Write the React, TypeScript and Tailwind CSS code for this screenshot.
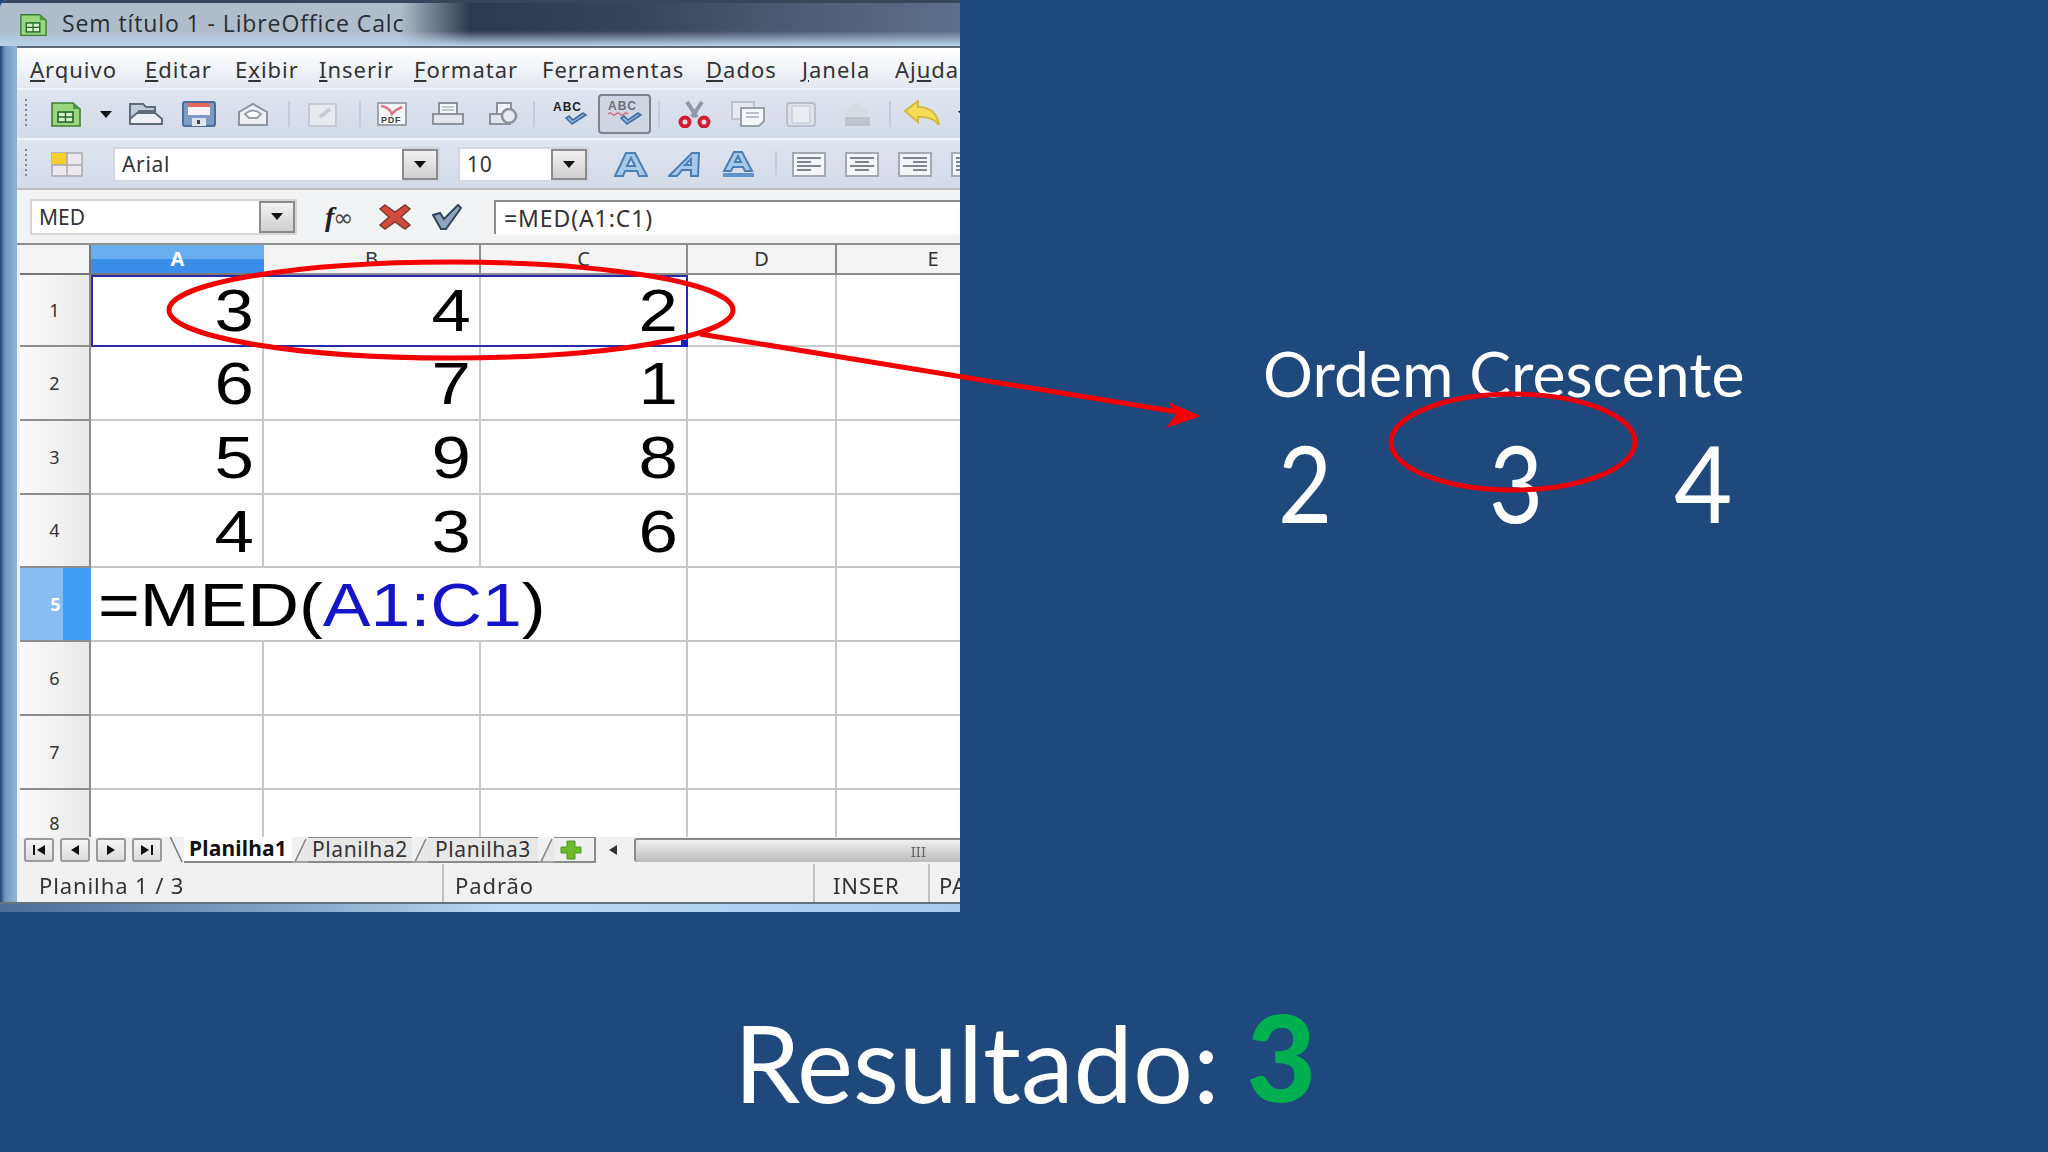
const rows = [
  ['3', '4', '2'],
  ['6', '7', '1'],
  ['5', '9', '8'],
  ['4', '3', '6'],
]

const menus = [
  { w: 'w-[115px]', pre: '', key: 'A', post: 'rquivo' },
  { w: 'w-[90px]', pre: '', key: 'E', post: 'ditar' },
  { w: 'w-[84px]', pre: 'E', key: 'x', post: 'ibir' },
  { w: 'w-[95px]', pre: '', key: 'I', post: 'nserir' },
  { w: 'w-[128px]', pre: '', key: 'F', post: 'ormatar' },
  { w: 'w-[164px]', pre: 'Fe', key: 'r', post: 'ramentas' },
  { w: 'w-[96px]', pre: '', key: 'D', post: 'ados' },
  { w: 'w-[93px]', pre: '', key: 'J', post: 'anela' },
  { w: 'w-[70px]', pre: 'Aj', key: 'u', post: 'da' },
]

function Grip() {
  return (
    <svg width="4" height="32" viewBox="0 0 4 32" className="shrink-0">
      <path d="M2 1v30" stroke="#7d8796" strokeWidth="2" strokeDasharray="2 3" />
    </svg>
  )
}

function Sep({ className }: { className: string }) {
  return <div className={`w-[2px] h-[26px] bg-[#c5ccd8] shrink-0 ${className}`} />
}

function CalcDoc({ size = 30 }: { size?: number }) {
  return (
    <svg width={size} height={size * 0.87} viewBox="0 0 30 26" className="shrink-0">
      <path d="M1 2h21l7 6v17H1z" fill="#9bd67f" stroke="#3f7d3c" strokeWidth="1.6" />
      <path d="M22 2l7 6h-7z" fill="#4d9b48" />
      <rect x="7" y="11" width="15" height="10" fill="#d8f0c8" stroke="#1f6a2a" strokeWidth="1.6" />
      <path d="M7 16h15M14.500 11v10" stroke="#1f6a2a" strokeWidth="1.4" />
    </svg>
  )
}

function Arrow({ className = '' }: { className?: string }) {
  return (
    <svg width="12" height="7" viewBox="0 0 12 7" className={`shrink-0 ${className}`}>
      <path d="M0 0h12L6 7z" fill="#111" />
    </svg>
  )
}

function Combo({ className, text }: { className: string; text: string }) {
  return (
    <div className={`h-[35px] bg-white border-2 border-[#d3d8e0] flex items-center shrink-0 ${className}`}>
      <span className="flex-1 pl-[7px] pt-[2px] text-[21px] text-[#333] tracking-[0.7px]">{text}</span>
      <div className="w-[36px] h-[31px] border-2 border-[#8b8b8b] bg-gradient-to-b from-[#f2f2f2] to-[#cfcfcf] flex items-center justify-center">
        <Arrow />
      </div>
    </div>
  )
}

function Toolbar1() {
  return (
    <div className="h-[50px] flex items-center pl-[7px] border-b-2 border-[#f0f3f8] bg-gradient-to-b from-[#dfe5ef] to-[#d3dbe8]">
      <Grip />
      <div className="ml-[23px]"><CalcDoc /></div>
      <Arrow className="ml-[19px]" />
      <svg width="34" height="24" viewBox="0 0 34 24" className="ml-[17px] shrink-0">
        <path d="M1 22V2h13l3 3h9v4H10L6 16" fill="#c4ccd6" stroke="#5e6b78" strokeWidth="2" />
        <path d="M8 11h18l7 6v5H1v-5z" fill="#eef1f5" stroke="#5e6b78" strokeWidth="2" />
      </svg>
      <svg width="34" height="26" viewBox="0 0 34 26" className="ml-[19px] shrink-0">
        <rect x="1" y="1" width="32" height="24" rx="2" fill="#7d9cc4" stroke="#4a6d9c" strokeWidth="2" />
        <rect x="6" y="2" width="22" height="12" fill="#f4f4f4" />
        <rect x="6" y="2" width="22" height="4" fill="#e36a5a" />
        <rect x="10" y="17" width="14" height="8" fill="#dfe4ea" />
        <rect x="15" y="19" width="3" height="4" fill="#444" />
      </svg>
      <svg width="32" height="24" viewBox="0 0 32 24" className="ml-[21px] shrink-0">
        <path d="M2 10L16 2l14 8v13H2z" fill="#eef0f3" stroke="#8d949e" strokeWidth="2" />
        <path d="M8 12q8-7 16 0l-4 4h-8z" fill="#fff" stroke="#98a0aa" strokeWidth="2" />
      </svg>
      <Sep className="ml-[19px]" />
      <svg width="30" height="25" viewBox="0 0 30 25" className="ml-[18px] shrink-0">
        <rect x="1" y="2" width="27" height="22" fill="#e7eaef" stroke="#c5cad2" strokeWidth="2" />
        <path d="M12 15l10-8" stroke="#c6cbd3" strokeWidth="4" />
      </svg>
      <Sep className="ml-[21px]" />
      <svg width="30" height="24" viewBox="0 0 30 24" className="ml-[16px] shrink-0">
        <rect x="1" y="1" width="28" height="22" fill="#f5f5f5" stroke="#8d939b" strokeWidth="1.6" />
        <path d="M4 4q8 1 11 8q3-4 10-7" stroke="#e07486" strokeWidth="2.500" fill="none" />
        <text x="4" y="21" fontFamily="Liberation Sans" fontWeight="700" fontSize="9" letterSpacing="0.8" fill="#444">PDF</text>
      </svg>
      <svg width="32" height="24" viewBox="0 0 32 24" className="ml-[25px] shrink-0">
        <path d="M7 1h18v11H7z" fill="#f2f4f7" stroke="#8b929c" strokeWidth="2" />
        <path d="M1 12h30v10H1z" fill="#e2e6ec" stroke="#8b929c" strokeWidth="2" />
        <path d="M10 5h12M10 8h12" stroke="#b3b9c2" strokeWidth="1.500" />
      </svg>
      <svg width="32" height="26" viewBox="0 0 32 26" className="ml-[23px] shrink-0">
        <path d="M3 13h20v10H3z" fill="#e2e6ec" stroke="#8b929c" strokeWidth="2" />
        <path d="M10 2h14v11H10z" fill="#f2f4f7" stroke="#8b929c" strokeWidth="2" />
        <circle cx="22" cy="15" r="7" fill="#e8ebf0" stroke="#8b929c" strokeWidth="2.500" />
      </svg>
      <Sep className="ml-[14px]" />
      <svg width="36" height="28" viewBox="0 0 36 28" className="ml-[17px] shrink-0">
        <text x="1" y="11" fontFamily="Liberation Sans" fontWeight="700" fontSize="12" letterSpacing="1" fill="#222">ABC</text>
        <path d="M14 18l6 6 14-9-3-2-10 7-4-4z" fill="#8fb4da" stroke="#3f6fa3" strokeWidth="1.600" />
      </svg>
      <div className="ml-[10px] w-[53px] h-[40px] rounded-[4px] border-2 border-[#7a828c] bg-[#cfd6e2] flex items-center justify-center shrink-0">
        <svg width="36" height="28" viewBox="0 0 36 28">
          <text x="1" y="10" fontFamily="Liberation Sans" fontWeight="700" fontSize="12" letterSpacing="1" fill="#6c6f78">ABC</text>
          <path d="M1 14q2-2 4 0t4 0 4 0 4 0 4 0" stroke="#d06a78" strokeWidth="1.200" fill="none" />
          <path d="M14 18l6 6 14-9-3-2-10 7-4-4z" fill="#8fb4da" stroke="#3f6fa3" strokeWidth="1.600" />
        </svg>
      </div>
      <Sep className="ml-[7px]" />
      <svg width="33" height="27" viewBox="0 0 33 27" className="ml-[18px] shrink-0">
        <path d="M9 1l10 15M24 1L14 16" stroke="#8f98a3" strokeWidth="4" />
        <circle cx="7" cy="21" r="4.500" fill="none" stroke="#d01c34" strokeWidth="4" />
        <circle cx="26" cy="21" r="4.500" fill="none" stroke="#d01c34" strokeWidth="4" />
      </svg>
      <svg width="34" height="26" viewBox="0 0 34 26" className="ml-[20px] shrink-0">
        <rect x="1" y="1" width="22" height="17" fill="#e6e9ee" stroke="#bdc3cc" strokeWidth="2" />
        <path d="M10 7h23v13l-5 5H10z" fill="#f5f6f8" stroke="#98a0aa" strokeWidth="2" />
        <path d="M15 12h13M15 16h13" stroke="#b8bec7" strokeWidth="2" />
      </svg>
      <svg width="30" height="26" viewBox="0 0 30 26" className="ml-[21px] shrink-0">
        <rect x="1" y="2" width="28" height="23" rx="3" fill="#dfe3ea" stroke="#b9bfc9" strokeWidth="2" />
        <rect x="6" y="5" width="18" height="17" fill="#e9ecf1" stroke="#c9ced6" strokeWidth="1.500" />
      </svg>
      <svg width="27" height="26" viewBox="0 0 27 26" className="ml-[28px] shrink-0">
        <path d="M13 1l11 9v5H2v-5z" fill="#d7dbe2" />
        <path d="M1 16h25v9H1z" fill="#bfc4cc" />
      </svg>
      <Sep className="ml-[18px]" />
      <svg width="36" height="28" viewBox="0 0 36 28" className="ml-[13px] shrink-0">
        <path d="M1 11L14 1v6q18 0 21 18-6-9-21-8v5z" fill="#f4dc58" stroke="#d2bb3e" strokeWidth="2" />
      </svg>
      <Arrow className="ml-[18px]" />
    </div>
  )
}

function Letter({ className, italic, underline }: { className: string; italic?: boolean; underline?: boolean }) {
  return (
    <svg width="34" height="27" viewBox="0 0 34 27" className={`shrink-0 ${className}`}>
      <path
        d={italic ? 'M1 25L24 2h7l-1 23h-7v-6H14l-5 6zM17 14h6v-6z' : underline ? 'M2 20L12 1h8l10 19h-7l-2-4h-10l-2 4zM13 11h6l-3-6z' : 'M1 25L12 2h9l12 23h-8l-2-5H11l-2 5zM13 15h8l-4-8z'}
        fill="#a8c8e8"
        stroke="#4a7fb5"
        strokeWidth="2"
        fillRule="evenodd"
      />
      {underline && <rect x="1" y="22" width="31" height="4" fill="#5d95cc" />}
    </svg>
  )
}

function Align({ className, lines }: { className: string; lines: string }) {
  return (
    <svg width="34" height="25" viewBox="0 0 34 25" className={`shrink-0 ${className}`}>
      <rect x="1" y="1" width="32" height="23" fill="#f4f5f7" stroke="#a4aab3" strokeWidth="2" />
      <path d={lines} stroke="#7f858e" strokeWidth="2" />
    </svg>
  )
}

function Toolbar2() {
  return (
    <div className="h-[50px] flex items-center pl-[7px] border-b-2 border-[#bdbdbd] bg-gradient-to-b from-[#dfe5ef] to-[#d3dbe8]">
      <Grip />
      <svg width="32" height="25" viewBox="0 0 32 25" className="ml-[23px] shrink-0">
        <rect x="1" y="1" width="30" height="23" fill="#ece8ee" stroke="#a9a9b0" strokeWidth="1.500" />
        <rect x="1" y="1" width="15" height="12" fill="#f5cf2d" />
        <path d="M16 1v23M1 13h30" stroke="#a9a9b0" strokeWidth="1.500" />
      </svg>
      <Combo className="ml-[30px] w-[327px]" text="Arial" />
      <Combo className="ml-[18px] w-[131px]" text="10" />
      <Letter className="ml-[25px]" />
      <Letter className="ml-[20px]" italic />
      <Letter className="ml-[20px]" underline />
      <Sep className="ml-[19px]" />
      <Align className="ml-[15px]" lines="M5 6h24M5 10h14M5 14h24M5 18h14" />
      <Align className="ml-[19px]" lines="M5 6h24M10 10h14M5 14h24M10 18h14" />
      <Align className="ml-[19px]" lines="M5 6h24M15 10h14M5 14h24M15 18h14" />
      <Align className="ml-[19px]" lines="M5 6h24M5 10h24M5 14h24M5 18h24" />
    </div>
  )
}

function FormulaBar() {
  return (
    <div className="h-[55px] flex items-center pl-[13px] border-b-2 border-[#8f8f8f] bg-[#f2f3f5]">
      <div className="h-[36px] w-[267px] bg-white border-2 border-[#d6d6d6] flex items-center shrink-0">
        <span className="flex-1 pl-[7px] pt-[3px] text-[21px] text-[#333]">MED</span>
        <div className="w-[36px] h-[32px] border-2 border-[#8b8b8b] bg-gradient-to-b from-[#f2f2f2] to-[#cfcfcf] flex items-center justify-center">
          <Arrow />
        </div>
      </div>
      <span className="ml-[28px] w-[36px] font-['Liberation_Serif'] italic font-bold text-[28px] text-[#222] shrink-0 whitespace-nowrap">
        f<span className="font-['DejaVu_Sans'] not-italic font-normal text-[24px] text-[#444] -ml-[1px]">∞</span>
      </span>
      <svg width="32" height="26" viewBox="0 0 32 26" className="ml-[18px] shrink-0">
        <path d="M6 1l10 7 10-7 5 4-9 8 9 8-5 4-10-7-10 7-5-4 9-8-9-8z" fill="#d24a3c" stroke="#7d3a34" strokeWidth="1.500" />
      </svg>
      <svg width="30" height="26" viewBox="0 0 30 26" className="ml-[21px] shrink-0">
        <path d="M1 11l7-2 4 6L26 1l3 3-15 21h-5z" fill="#8fa4ba" stroke="#30455c" strokeWidth="2" />
      </svg>
      <div className="ml-[32px] h-[34px] flex-1 bg-white border-l-2 border-t-2 border-[#8a8a8a] flex items-center pl-[8px] pt-[1px] text-[23px] text-[#333] tracking-[0.9px]">=MED(A1:C1)</div>
    </div>
  )
}

function Sheet() {
  return (
    <div className="pl-[3px] bg-[#eef0f3]">
      <div className="relative grid grid-cols-[71px_173px_217px_207px_149px_192px] grid-rows-[30px_72px_74px_74px_73px_74px_74px_74px_47px] bg-white overflow-hidden">
        <div className="bg-[#f4f4f4] border-r-2 border-b-2 border-[#777]" />
        <div className="bg-gradient-to-b from-[#69afef] from-50% to-[#3a8eea] to-50% text-white border-b-2 border-[#777] flex items-center justify-center text-[20px] font-bold">A</div>
        {['B', 'C', 'D'].map(c => (
          <div key={c} className="bg-[#f4f4f4] border-r-2 border-b-2 border-[#8d8d8d] flex items-center justify-center text-[20px] text-[#333]">{c}</div>
        ))}
        <div className="bg-[#f4f4f4] border-b-2 border-[#8d8d8d] flex items-center justify-center text-[20px] text-[#333]">E</div>

        {rows.map((r, i) => [
          <div key={`h${i}`} className="bg-gradient-to-r from-[#fbfbfb] to-[#e9e9e9] border-r-2 border-b-2 border-[#8d8d8d] flex items-center justify-center text-[18px] text-[#333]">{i + 1}</div>,
          ...r.map((v, j) => (
            <div key={`${i}${j}`} className="border-r-2 border-b-2 border-[#c8c8c8] flex items-center justify-end pr-[8px] pt-[3px] font-['Liberation_Sans'] text-[59px] text-black">
              <span className="inline-block origin-right scale-x-[1.2]">{v}</span>
            </div>
          )),
          <div key={`d${i}`} className="border-r-2 border-b-2 border-[#c8c8c8]" />,
          <div key={`e${i}`} className="border-b-2 border-[#c8c8c8]" />,
        ])}

        <div className="bg-gradient-to-r from-[#88bdf2] from-60% to-[#3f9df2] to-60% border-b-2 border-[#8d8d8d] flex items-center justify-center text-[18px] font-bold text-white">5</div>
        <div className="col-span-3 border-r-2 border-b-2 border-[#c8c8c8] flex items-center pl-[7px] font-['Liberation_Sans'] text-[62px] text-black">
          <span className="inline-block origin-left scale-x-[1.155] whitespace-nowrap">
            =MED(<span className="text-[#1515c8]">A1:C1</span>)
          </span>
        </div>
        <div className="border-r-2 border-b-2 border-[#c8c8c8]" />
        <div className="border-b-2 border-[#c8c8c8]" />

        {['6', '7', '8'].map(n => [
          <div key={`h${n}`} className={`bg-gradient-to-r from-[#fbfbfb] to-[#e9e9e9] border-r-2 border-[#8d8d8d] flex justify-center text-[18px] text-[#333] ${n === '8' ? 'items-end' : 'items-center border-b-2'}`}>{n}</div>,
          <div key={`a${n}`} className={`border-r-2 border-[#c8c8c8] ${n === '8' ? '' : 'border-b-2'}`} />,
          <div key={`b${n}`} className={`border-r-2 border-[#c8c8c8] ${n === '8' ? '' : 'border-b-2'}`} />,
          <div key={`c${n}`} className={`border-r-2 border-[#c8c8c8] ${n === '8' ? '' : 'border-b-2'}`} />,
          <div key={`d${n}`} className={`border-r-2 border-[#c8c8c8] ${n === '8' ? '' : 'border-b-2'}`} />,
          <div key={`e${n}`} className={`border-[#c8c8c8] ${n === '8' ? '' : 'border-b-2'}`} />,
        ])}

        {/* selection box around A1:C1 */}
        <div className="absolute left-[71px] top-[30px] w-[597px] h-[72px] border-2 border-[#2a2aa8]" />
        <div className="absolute left-[661px] top-[95px] w-[7px] h-[7px] bg-[#1a1ad0]" />
      </div>
    </div>
  )
}

function NavButton({ d }: { d: string }) {
  return (
    <div className="w-[30px] h-[24px] mr-[6px] rounded-[3px] border-2 border-[#9a9a9a] bg-gradient-to-b from-[#f5f5f5] to-[#dcdcdc] flex items-center justify-center shrink-0">
      <svg width="14" height="12" viewBox="0 0 14 12"><path d={d} fill="#111" /></svg>
    </div>
  )
}

function Slant() {
  return (
    <svg width="16" height="26" viewBox="0 0 16 26" className="shrink-0">
      <path d="M0 25h3L14 2" fill="none" stroke="#8a8a8a" strokeWidth="1.500" />
      <path d="M3 25L14 2h2v23z" fill="#e8e8e8" />
      <path d="M3 25L14 2M3 25h13" fill="none" stroke="#8a8a8a" strokeWidth="1.500" />
    </svg>
  )
}

function TabBar() {
  return (
    <div className="h-[26px] flex items-center pl-[7px] bg-[#f0f1f3] font-['Noto_Sans'] text-[21px] text-[#333]">
      <NavButton d="M1 1h2v10H1zM13 1v10L5 6z" />
      <NavButton d="M11 1v10L3 6z" />
      <NavButton d="M3 1v10l8-5z" />
      <NavButton d="M1 1v10l8-5zM11 1h2v10h-2z" />
      <svg width="16" height="30" viewBox="0 0 16 30" className="shrink-0 self-end">
        <path d="M1 1l13 28" stroke="#777" strokeWidth="1.500" />
      </svg>
      <span className="h-[26px] w-[108px] flex items-center justify-center font-bold text-[#111] tracking-[0.2px] shrink-0 border-b-2 border-[#8a8a8a] bg-white">Planilha1</span>
      <Slant />
      <span className="h-[26px] w-[104px] flex items-center justify-center tracking-[0.6px] shrink-0 border-b-2 border-t border-[#8a8a8a] bg-[#e8e8e8]">Planilha2</span>
      <Slant />
      <span className="h-[26px] w-[110px] flex items-center justify-center tracking-[0.6px] shrink-0 border-b-2 border-t border-[#8a8a8a] bg-[#e8e8e8]">Planilha3</span>
      <Slant />
      <div className="w-[42px] h-[26px] border-r-2 border-t border-b-2 border-[#8a8a8a] bg-[#eef0f0] flex items-center justify-start pl-[6px] shrink-0">
        <svg width="22" height="20" viewBox="0 0 22 20">
          <path d="M7 1h8v6h6v6h-6v6H7v-6H1V7h6z" fill="#6cb92c" stroke="#4f9a1c" />
        </svg>
      </div>
      <svg width="10" height="12" viewBox="0 0 10 12" className="ml-[12px] shrink-0"><path d="M9 1v10L1 6z" fill="#333" /></svg>
      <div className="ml-[16px] flex-1 h-[24px] rounded-l-[3px] border-l-2 border-t-2 border-[#8a8a8a] bg-gradient-to-b from-[#f0f0f0] to-[#bcbcbc] flex items-center justify-end pr-[34px] text-[15px] text-[#666]">III</div>
    </div>
  )
}

function StatusBar() {
  return (
    <div className="h-[39px] flex items-center bg-[#f1f1f1] text-[22px] text-[#333] font-['Noto_Sans'] tracking-[0.9px] whitespace-nowrap">
      <div className="w-[425px] pl-[22px] pt-[5px] shrink-0">Planilha 1 / 3</div>
      <div className="w-[371px] pl-[11px] pt-[5px] border-l-2 border-[#c2c2c2] shrink-0">Padrão</div>
      <div className="w-[115px] pl-[18px] pt-[5px] border-l-2 border-[#c2c2c2] shrink-0">INSER</div>
      <div className="w-[30px] pl-[9px] pt-[5px] border-l-2 border-[#c2c2c2] shrink-0">PA</div>
    </div>
  )
}

function CalcWindow() {
  return (
    <div className="w-[960px] h-[912px] shrink-0 flex flex-col overflow-hidden rounded-tl-[8px] blur-[0.6px] font-['Noto_Sans'] bg-[linear-gradient(to_right,#21426f_0,#6d96bd_5px,#8fb2d2_15px)]">
      <div className="h-[46px] shrink-0 flex items-center pl-[20px] gap-[15px] bg-[linear-gradient(to_bottom,transparent_65%,#b7d3ea),linear-gradient(to_right,#aebdcb_0,#b0bdca_400px,#2e3950_470px,#39445a_640px,#4d5c76_800px,#5d6f8b_960px)] border-t-[3px] border-[#38465c]">
        <CalcDoc size={27} />
        <span className="text-[23px] leading-none -mt-[3px] text-[#2a2d33] tracking-[0.9px] font-['Open_Sans'] whitespace-nowrap">Sem título 1 - LibreOffice Calc</span>
      </div>
      <div className="ml-[17px] flex-1 flex flex-col min-h-0 border-t-2 border-[#5d6b78]">
        <div className="h-[42px] shrink-0 flex items-center pl-[13px] pt-[3px] text-[22px] text-[#333] tracking-[1px] bg-gradient-to-b from-[#ffffff] to-[#e3e8f0] border-b-2 border-[#f0f3f8]">
          {menus.map(m => (
            <div key={m.post} className={`${m.w} shrink-0 whitespace-nowrap`}>
              {m.pre}<u>{m.key}</u>{m.post}
            </div>
          ))}
        </div>
        <Toolbar1 />
        <Toolbar2 />
        <FormulaBar />
        <Sheet />
        <TabBar />
        <StatusBar />
      </div>
      <div className="h-[10px] shrink-0 border-t-2 border-[#66727e] bg-[linear-gradient(to_right,#4a6c97_0,#87a9c8_300px,#b9d8f3_500px,#a9cdee_960px)]" />
    </div>
  )
}

export default function App() {
  return (
    <div className="relative w-[2048px] h-[1152px] bg-[#1f497d] overflow-hidden flex flex-col font-['Lato'] text-white">
      <div className="flex h-[912px]">
        <CalcWindow />
        <div className="flex-1 pl-[303px] pt-[335px]">
          <div className="text-[62.5px] leading-[76px] whitespace-nowrap">Ordem Crescente</div>
          <div className="flex text-[106px] leading-[120px] mt-[11px] pl-[15px]">
            <span className="w-[211px] inline-block origin-left scale-x-[0.88]">2</span>
            <span className="w-[183px] inline-block origin-left scale-x-[0.88]">3</span>
            <span className="inline-block origin-left scale-x-[0.95] ml-[2px]">4</span>
          </div>
        </div>
      </div>
      <div className="flex-1 flex items-center pl-[734px] pt-[60px]">
        <span className="text-[106px] leading-none">Resultado:</span>
        <span className="ml-[27px] text-[120px] leading-none font-black text-[#00b050] -mt-[12px]">3</span>
      </div>

      {/* red annotations drawn over the slide */}
      <svg width="2048" height="1152" viewBox="0 0 2048 1152" className="absolute inset-0 pointer-events-none">
        <ellipse cx="451" cy="310" rx="282" ry="48" fill="none" stroke="#f40000" strokeWidth="5" />
        <ellipse cx="1513" cy="442" rx="122" ry="48" fill="none" stroke="#e8000c" strokeWidth="5" />
        <path d="M700 334L1190 414" stroke="#f40000" strokeWidth="5" />
        <path d="M1201 416L1168 402 1176 414 1166 428z" fill="#f40000" />
      </svg>
    </div>
  )
}
